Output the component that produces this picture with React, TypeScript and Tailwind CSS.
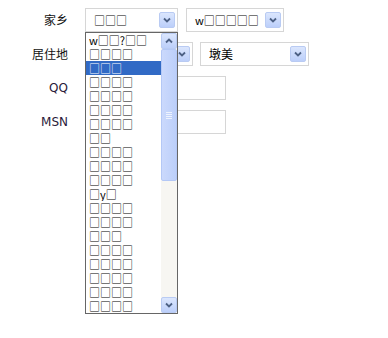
import React from 'react';

const cjk = { fontFamily: '"Noto Sans CJK SC", "DejaVu Sans", sans-serif' };

function Arrow({ down = true }: { down?: boolean }) {
    return (
        <span className="flex h-4 w-4 shrink-0 items-center justify-center rounded-[2px] border border-[#b9cbf3] bg-gradient-to-b from-[#dbe6fd] to-[#bccffa]">
            <svg width="8" height="6" viewBox="0 0 8 6">
                <path
                    d={down ? 'M1 1.5 L4 4.5 L7 1.5' : 'M1 4.5 L4 1.5 L7 4.5'}
                    fill="none"
                    stroke="#4d6185"
                    strokeWidth="1.8"
                />
            </svg>
        </span>
    );
}

function Select({ value, width, cn = false }: { value: string; width: string; cn?: boolean }) {
    return (
        <div className={`flex h-6 items-center justify-between border border-[#d6d6d6] bg-white pl-2 pr-[2px] ${width}`}>
            <span className={`${cn ? 'text-[12px]' : 'text-[11px]'} leading-none text-black`} style={cjk}>{value}</span>
            <Arrow />
        </div>
    );
}

const options = [
    'w□□?□□', '□□□□', '□□□', '□□□□', '□□□□', '□□□□', '□□□□', '□□', '□□□□', '□□□□',
    '□□□□', '□y□', '□□□□', '□□□□', '□□□', '□□□□', '□□□□', '□□□□', '□□□□', '□□□□',
];

function Row({ label, latin = false, children }: { label: string; latin?: boolean; children: React.ReactNode }) {
    return (
        <div className="flex h-6 items-center">
            <div
                className={`w-[68px] text-right text-[12px] ${latin ? 'text-[#2a1a3a]' : 'text-[#111]'}`}
                style={latin ? { fontFamily: '"DejaVu Sans", sans-serif' } : cjk}
            >
                {label}
            </div>
            <div className="ml-[17px] flex items-center gap-[7px]">{children}</div>
        </div>
    );
}

export default function App() {
    return (
        <div className="relative h-[338px] w-[388px] bg-white">
            <div className="flex flex-col gap-[10px] pt-2">
                <Row label="家乡">
                    <Select value="□□□" width="w-[93px]" />
                    <div className="ml-px">
                        <Select value="w□□□□□" width="w-[98px]" />
                    </div>
                </Row>
                <Row label="居住地">
                    <Select value="□□□□" width="w-[108px]" />
                    <Select value="墩美" width="w-[109px]" cn />
                </Row>
                <Row label="QQ" latin>
                    <div className="h-6 w-[141px] border border-[#d6d6d6] bg-white" />
                </Row>
                <Row label="MSN" latin>
                    <div className="h-6 w-[141px] border border-[#d6d6d6] bg-white" />
                </Row>
            </div>

            {/* open dropdown list */}
            <div className="absolute left-[85px] top-[32px] flex h-[282px] w-[93px] border border-[#666] bg-white">
                <ul className="flex-1 overflow-hidden">
                    {options.map((o, i) => (
                        <li
                            key={i}
                            className={`h-[14px] overflow-hidden pl-[3px] text-[11px] leading-[14px] ${i === 2 ? 'bg-[#316ac5] text-white' : 'text-black'}`}
                            style={cjk}
                        >
                            {o}
                        </li>
                    ))}
                </ul>
                <div className="flex w-4 flex-col bg-[#f7f6f2]">
                    <Arrow down={false} />
                    <div className="flex h-[132px] items-center justify-center rounded-[2px] border border-[#b4c8f6] bg-gradient-to-r from-[#cbd9fc] to-[#bccffa]">
                        <div className="flex flex-col gap-px">
                            <div className="h-px w-[6px] bg-[#eef3fe]" />
                            <div className="h-px w-[6px] bg-[#eef3fe]" />
                            <div className="h-px w-[6px] bg-[#eef3fe]" />
                            <div className="h-px w-[6px] bg-[#eef3fe]" />
                        </div>
                    </div>
                    <div className="flex-1" />
                    <Arrow />
                </div>
            </div>
        </div>
    );
}
